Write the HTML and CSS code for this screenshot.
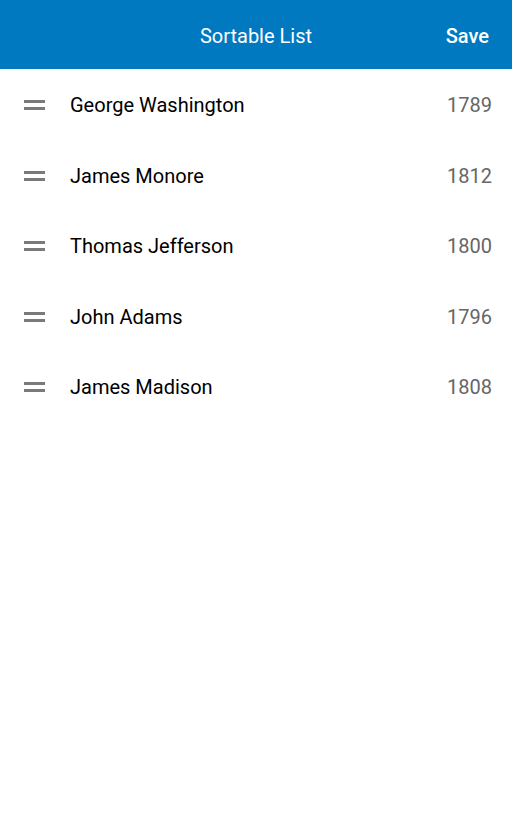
FILE: index.html
```html
<!DOCTYPE html>
<html>
<head>
<meta charset="utf-8">
<link rel="stylesheet" href="styles.css">
</head>
<body>
<header class="bar">
  <div class="bar-side"></div>
  <h1 class="bar-title">Sortable List</h1>
  <div class="bar-side bar-right"><span class="save">Save</span></div>
</header>
<ul class="list">
  <li class="row"><span class="handle"></span><span class="name">George Washington</span><span class="year">1789</span></li>
  <li class="row"><span class="handle"></span><span class="name">James Monore</span><span class="year">1812</span></li>
  <li class="row"><span class="handle"></span><span class="name">Thomas Jefferson</span><span class="year">1800</span></li>
  <li class="row"><span class="handle"></span><span class="name">John Adams</span><span class="year">1796</span></li>
  <li class="row"><span class="handle"></span><span class="name">James Madison</span><span class="year">1808</span></li>
</ul>
</body>
</html>
```
FILE: styles.css
```css
html, body {
  margin: 0;
  padding: 0;
  background: #fff;
  font-family: Roboto, "Noto Sans", sans-serif;
}
.bar {
  height: 69px;
  background: #0079c1;
  display: grid;
  grid-template-columns: 1fr auto 1fr;
  align-items: center;
  color: #fff;
  padding-top: 2px;
  box-sizing: border-box;
}
.bar-side {
  display: flex;
}
.bar-right {
  justify-content: flex-end;
  padding-right: 23px;
}
.bar-title {
  margin: 0;
  font-size: 20px;
  font-weight: 400;
}
.save {
  font-size: 20px;
  font-weight: 500;
}
.list {
  list-style: none;
  margin: 0;
  padding: 1px 0 0;
}
.row {
  height: 70.5px;
  display: flex;
  align-items: center;
  padding: 0 20px 0 24px;
}
.handle {
  width: 21px;
  height: 10px;
  border-top: 3px solid #7a7a7a;
  border-bottom: 3px solid #7a7a7a;
  box-sizing: border-box;
  margin-right: 25px;
}
.name {
  flex: 1;
  font-size: 20px;
  color: #000;
}
.year {
  font-size: 20px;
  color: #666;
}
```
